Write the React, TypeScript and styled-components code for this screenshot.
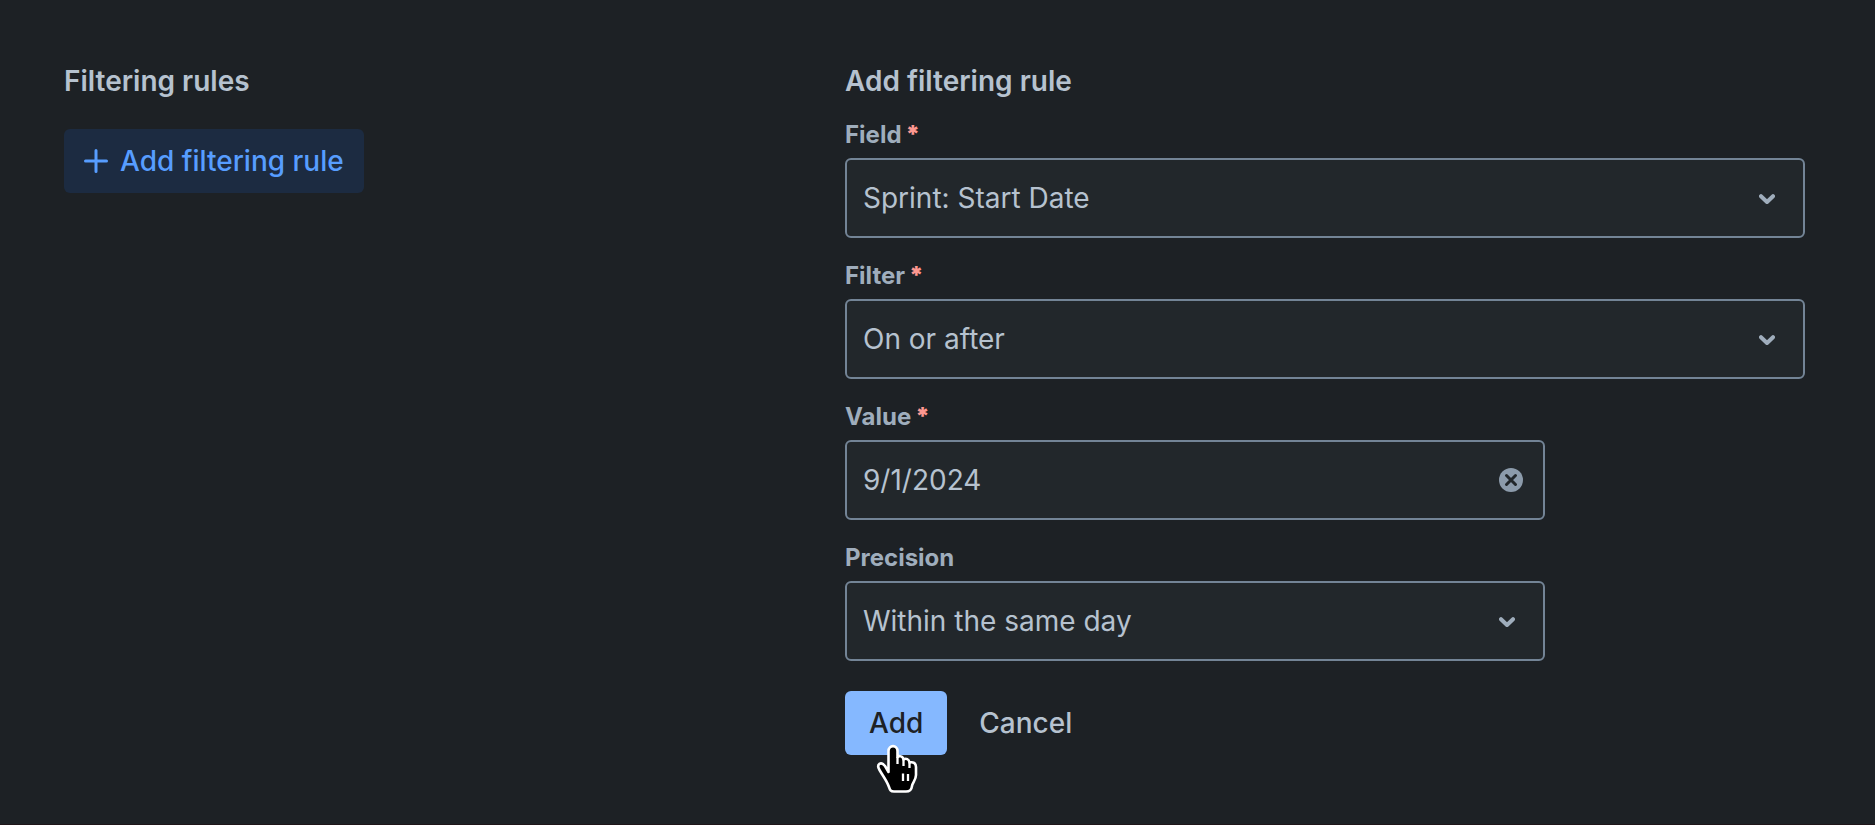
import React from "react";
import styled, { createGlobalStyle } from "styled-components";

const GlobalStyle = createGlobalStyle`
  *, *::before, *::after { box-sizing: border-box; }
  body {
    margin: 0;
    background: #1d2125;
    color: #b6c2cf;
    font-family: Inter, "Liberation Sans", sans-serif;
    font-size: 28px;
    line-height: 32px;
  }
  button, input, select { font: inherit; color: inherit; }
`;

const Page = styled.main`
  display: grid;
  grid-template-columns: 781fr 960fr;
  align-items: start;
  min-height: 100vh;
  padding: 65px 70px 32px 64px;
  border-bottom: 1px solid #1f1519;
`;

const RulesPanel = styled.section`
  display: flex;
  flex-direction: column;
  align-items: flex-start;
  gap: 32px;
`;

const RuleForm = styled.form`
  display: flex;
  flex-direction: column;
  gap: 22px;
`;

const Heading = styled.h2`
  margin: 0;
  font-size: 28px;
  font-weight: 600;
  line-height: 32px;
`;

const Button = styled.button<{ $variant: "soft" | "primary" | "subtle" }>`
  display: inline-flex;
  align-items: center;
  justify-content: center;
  gap: 12px;
  height: 64px;
  padding: 0 ${({ $variant }) => ($variant === "soft" ? "20px" : "24px")};
  border: 0;
  border-radius: 6px;
  font-size: 28px;
  font-weight: 500;
  white-space: nowrap;
  cursor: pointer;
  background: ${({ $variant }) =>
    $variant === "soft" ? "#1c2b41" : $variant === "primary" ? "#85b8ff" : "transparent"};
  color: ${({ $variant }) =>
    $variant === "soft" ? "#579dff" : $variant === "primary" ? "#1d2125" : "#b6c2cf"};
`;

const Field = styled.div<{ $narrow?: boolean }>`
  display: flex;
  flex-direction: column;
  gap: 7px;
  max-width: ${({ $narrow }) => ($narrow ? "700px" : "none")};
`;

const Label = styled.label`
  color: #9fadbc;
  font-size: 24px;
  font-weight: 700;
  line-height: 32px;
`;

const Required = styled.span`
  margin-left: 4px;
  color: #fd9891;
  font-weight: 900;
`;

const Control = styled.div`
  display: grid;
  align-items: center;
  height: 80px;
  border: 2px solid #738496;
  border-radius: 6px;
  background: #22272b;

  > * { grid-area: 1 / 1; }

  select, input {
    width: 100%;
    height: 100%;
    padding: 0 80px 0 16px;
    border: 0;
    outline: 0;
    background: transparent;
    appearance: none;
  }
`;

const ChevronIcon = styled.svg`
  justify-self: end;
  margin-right: 28px;
  pointer-events: none;
`;

const ClearButton = styled.button`
  display: flex;
  justify-self: end;
  margin-right: 20px;
  padding: 0;
  border: 0;
  background: transparent;
  cursor: pointer;
`;

const Actions = styled.div`
  display: flex;
  gap: 8px;
  padding-top: 8px;
`;

const PointerAnchor = styled.div`
  position: relative;
  display: flex;
`;

const Pointer = styled.svg`
  position: absolute;
  top: 53px;
  left: 31px;
  pointer-events: none;
`;

function SelectField({ id, label, value, required, narrow }: {
  id: string; label: string; value: string; required?: boolean; narrow?: boolean;
}) {
  return (
    <Field $narrow={narrow}>
      <Label htmlFor={id}>{label}{required && <Required>*</Required>}</Label>
      <Control>
        <select id={id} defaultValue={value}>
          <option>{value}</option>
        </select>
        <ChevronIcon width="16" height="14" viewBox="0 0 16 14" fill="none" aria-hidden="true">
          <path d="M2 5.200 8 11 14 5.200" stroke="#9fadbc" strokeWidth="4" strokeLinecap="round" strokeLinejoin="round" />
        </ChevronIcon>
      </Control>
    </Field>
  );
}

export default function App() {
  const [date, setDate] = React.useState("9/1/2024");
  return (
    <>
      <GlobalStyle />
      <Page>
        <RulesPanel>
          <Heading>Filtering rules</Heading>
          <Button type="button" $variant="soft">
            <svg width="24" height="24" viewBox="0 0 24 24" fill="none" aria-hidden="true">
              <path d="M12 1.5v21M1.5 12h21" stroke="currentColor" strokeWidth="3" strokeLinecap="round" />
            </svg>
            Add filtering rule
          </Button>
        </RulesPanel>
        <RuleForm onSubmit={(e) => e.preventDefault()}>
          <Heading>Add filtering rule</Heading>
          <SelectField id="field" label="Field" value="Sprint: Start Date" required />
          <SelectField id="filter" label="Filter" value="On or after" required />
          <Field $narrow>
            <Label htmlFor="value">Value<Required>*</Required></Label>
            <Control>
              <input id="value" type="text" value={date} onChange={(e) => setDate(e.target.value)} />
              <ClearButton type="button" aria-label="Clear value" onClick={() => setDate("")}>
                <svg width="24" height="24" viewBox="0 0 24 24" fill="none" aria-hidden="true">
                  <circle cx="12" cy="12" r="12" fill="#8c9bab" />
                  <path d="m7.5 7.5 9 9m0-9-9 9" stroke="#22272b" strokeWidth="3" strokeLinecap="round" />
                </svg>
              </ClearButton>
            </Control>
          </Field>
          <SelectField id="precision" label="Precision" value="Within the same day" narrow />
          <Actions>
            <PointerAnchor>
              <Button type="submit" $variant="primary">Add</Button>
              <Pointer width="42" height="50" viewBox="0 0 42 50" aria-hidden="true">
                <path
                  d="M12.500 28V7C12.500 .5 21.500 .5 21.500 7V13C23 11.500 27 12 27.500 15.500 30 14 33 15 33.500 18.500 37 17.500 40 19 40 23V31C40 36 36.500 38.500 36 42 35.500 46 34 47.500 30 47.500H18C14.500 47.500 14 46 13 43 11 37 7 32 3.500 26 0 20 5 17 9 22Z"
                  fill="#000" stroke="#fff" strokeWidth="2.6" strokeLinejoin="round"
                />
                <path d="M21.500 13V20M27.500 15.500V22M33.500 18.500V24M27 29.500V37M32 30V37" stroke="#fff" strokeWidth="2.300" />
              </Pointer>
            </PointerAnchor>
            <Button type="button" $variant="subtle">Cancel</Button>
          </Actions>
        </RuleForm>
      </Page>
    </>
  );
}
